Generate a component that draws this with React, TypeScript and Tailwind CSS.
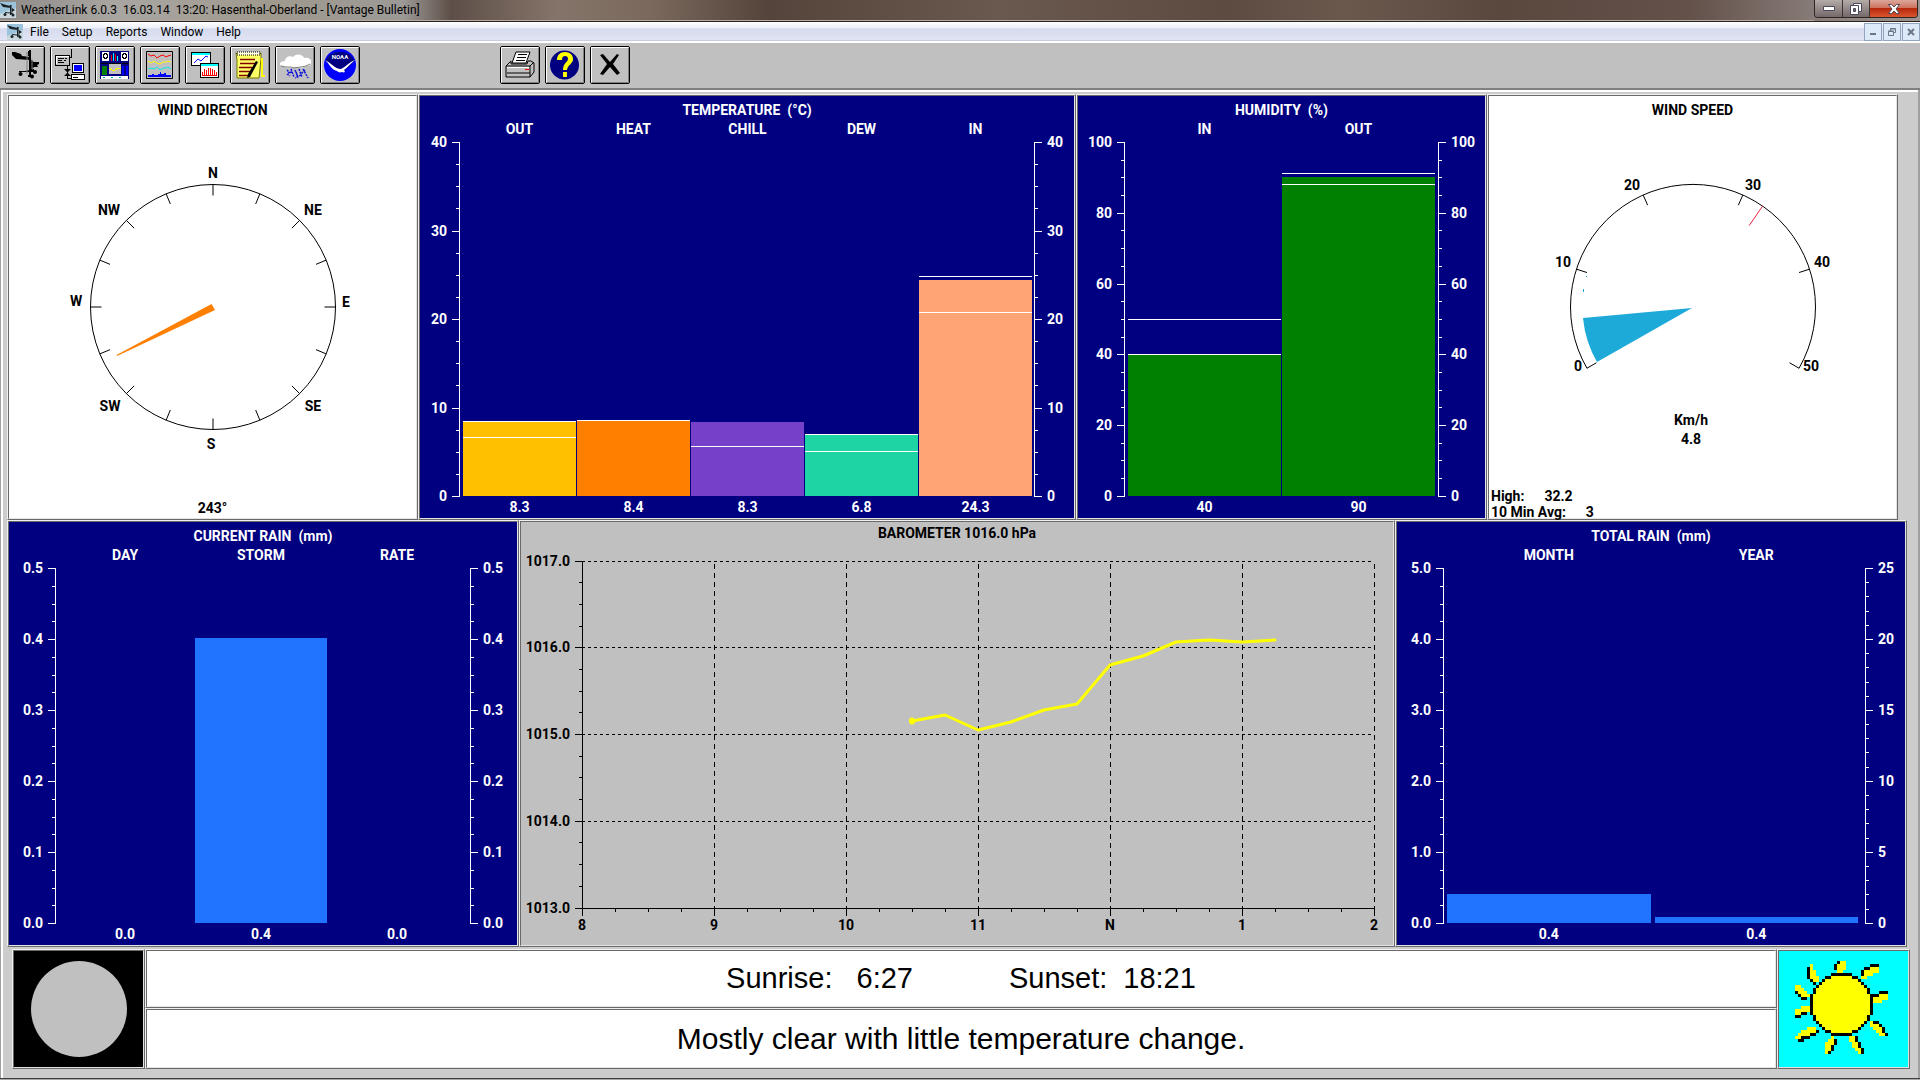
import React from 'react';

type Bar = { label: string; value: string; level: number; color: string; marks?: number[] };

const NAVY = 'bg-[#000080] text-white';

const temperature: Bar[] = [
  { label: 'OUT', value: '8.3', level: 8.4, color: 'bg-[#ffc000]', marks: [8.4, 6.6] },
  { label: 'HEAT', value: '8.4', level: 8.5, color: 'bg-[#ff8000]', marks: [8.5] },
  { label: 'CHILL', value: '8.3', level: 8.35, color: 'bg-[#7640c8]', marks: [5.5] },
  { label: 'DEW', value: '6.8', level: 6.9, color: 'bg-[#1ed4a4]', marks: [6.9, 5] },
  { label: 'IN', value: '24.3', level: 24.4, color: 'bg-[#ffa474]', marks: [24.8, 20.7] },
];

const humidity: Bar[] = [
  { label: 'IN', value: '40', level: 40, color: 'bg-[#008000]', marks: [39.8, 49.8] },
  { label: 'OUT', value: '90', level: 90.1, color: 'bg-[#008000]', marks: [91, 87.8] },
];

const currentRain: Bar[] = [
  { label: 'DAY', value: '0.0', level: 0, color: 'bg-[#2074ff]' },
  { label: 'STORM', value: '0.4', level: 0.401, color: 'bg-[#2074ff]' },
  { label: 'RATE', value: '0.0', level: 0, color: 'bg-[#2074ff]' },
];

// year is drawn against the right scale (25 mm), so it is a fifth of the left one
const totalRain: Bar[] = [
  { label: 'MONTH', value: '0.4', level: 0.41, color: 'bg-[#2074ff]' },
  { label: 'YEAR', value: '0.4', level: 0.085, color: 'bg-[#2074ff]' },
];

const pressure = [199, 193, 208, 200, 188, 182, 143, 134, 120, 118, 120, 118];

/* Etched frame used round every pane */
const Pane: React.FC<{ className?: string; children?: React.ReactNode }> = ({ className = '', children }) => (
  <section className="flex min-w-0 min-h-0 border border-t-[#f0f0f0] border-l-[#f0f0f0] border-r-[#696969] border-b-[#696969]">
    <div className={`flex flex-col flex-1 min-w-0 min-h-0 border border-t-[#696969] border-l-[#696969] border-r-[#e3e3e3] border-b-[#e3e3e3] ${className}`}>
      {children}
    </div>
  </section>
);

const Scale: React.FC<{ labels: string[]; minor: number; side: 'left' | 'right' }> = ({ labels, minor, side }) => {
  const ticks: (string | null)[] = [];
  labels.forEach((label, i) => {
    ticks.push(label);
    if (i < labels.length - 1) for (let k = 1; k < minor; k++) ticks.push(null);
  });
  return (
    <div className={`flex flex-col justify-between ${side === 'left' ? 'border-r' : 'border-l'} border-white`}>
      {ticks.map((label, i) => (
        <div key={i} className={`flex h-px items-center gap-[5px] ${side === 'left' ? 'justify-end' : 'flex-row-reverse justify-end'}`}>
          {label !== null && <span>{label}</span>}
          <i className={`h-px bg-white ${label !== null ? 'w-[7px]' : 'w-[3px]'}`} />
        </div>
      ))}
    </div>
  );
};

type BarChartProps = {
  title: string;
  bars: Bar[];
  max: number;
  left: string[];
  right: string[];
  minorLeft: number;
  minorRight: number;
  columns: string;
  inset: string;
};

const BarChart: React.FC<BarChartProps> = ({ title, bars, max, left, right, minorLeft, minorRight, columns, inset }) => (
  <Pane className={NAVY}>
    <h2 className="pt-[5px] text-center leading-[19px] whitespace-pre">{title}</h2>
    <div className={`grid flex-1 min-h-0 grid-rows-[22px_minmax(0,1fr)_21px] ${columns}`}>
      <div className={`col-start-2 flex ${inset}`}>
        {bars.map((b) => (
          <span key={b.label} className="flex-1 basis-0 text-center leading-[19px]">{b.label}</span>
        ))}
      </div>
      <div className="col-start-1 row-start-2 grid">
        <Scale labels={left} minor={minorLeft} side="left" />
      </div>
      <div className={`col-start-2 row-start-2 flex pb-px ${inset}`}>
        {bars.map((b) => (
          <div key={b.label} className="relative flex flex-1 basis-0 flex-col justify-end">
            <div className={b.color} style={{ height: `${(b.level / max) * 100}%` }} />
            {b.marks?.map((m) => (
              <i key={m} className="absolute inset-x-0 h-px bg-white" style={{ bottom: `${(m / max) * 100}%` }} />
            ))}
          </div>
        ))}
      </div>
      <div className="col-start-3 row-start-2 grid">
        <Scale labels={right} minor={minorRight} side="right" />
      </div>
      <div className={`col-start-2 row-start-3 flex ${inset}`}>
        {bars.map((b) => (
          <span key={b.label} className="flex-1 basis-0 text-center leading-[21px]">{b.value}</span>
        ))}
      </div>
    </div>
  </Pane>
);

const polar = (deg: number, r: number) => {
  const a = (deg * Math.PI) / 180;
  return [204 + r * Math.cos(a), 211 + r * Math.sin(a)];
};

const Tick: React.FC<{ deg: number; inner?: number; color?: string }> = ({ deg, inner = 111.5, color = '#000' }) => {
  const [x1, y1] = polar(deg, 122.5);
  const [x2, y2] = polar(deg, inner);
  return <line x1={x1} y1={y1} x2={x2} y2={y2} stroke={color} />;
};

const compass: [string, number, number][] = [
  ['N', 204, 77], ['NE', 304, 114], ['E', 337, 206], ['SE', 304, 310],
  ['S', 202, 348], ['SW', 101, 310], ['W', 67, 205], ['NW', 100, 114],
];

const WindDirection = () => (
  <Pane className="bg-white text-black">
    <h2 className="pt-[5px] text-center leading-[19px]">WIND DIRECTION</h2>
    <svg viewBox="0 24 407 368" className="min-h-0 w-full flex-1">
      <circle cx="204" cy="211" r="122.5" fill="none" stroke="#000" />
      {Array.from({ length: 16 }, (_, i) => <Tick key={i} deg={i * 22.5} />)}
      <polygon points="202.5,208 206,214 108,260 107.5,259" fill="#ff8000" />
      {compass.map(([t, x, y]) => (
        <text key={t} x={x} y={y + 5} textAnchor="middle">{t}</text>
      ))}
    </svg>
    <p className="flex h-[30px] items-end justify-center leading-[19px]">243°</p>
  </Pane>
);

const speeds: [number, number, number][] = [
  [0, 89, 270], [10, 74, 166], [20, 143, 89], [30, 264, 89], [40, 333, 166], [50, 322, 270],
];

const WindSpeed = () => (
  <Pane className="bg-white text-black">
    <h2 className="pt-[5px] text-center leading-[19px]">WIND SPEED</h2>
    <svg viewBox="0 24 407 368" className="min-h-0 w-full flex-1">
      <path d="M98 272.3 A122.5 122.5 0 1 1 310 272.3" fill="none" stroke="#000" />
      {speeds.map(([v]) => <Tick key={v} deg={150 + v * 4.8} />)}
      <Tick deg={304.6} inner={99} color="#f02040" />
      <path d="M203 212 L94 222 A109 109 0 0 0 108 266 Z" fill="#1eaad8" />
      <path d="M97 180h1v1h-1z M94 193h1v3h-1z" fill="#1eaad8" />
      {speeds.map(([v, x, y]) => (
        <text key={v} x={x} y={y + 5} textAnchor="middle">{v}</text>
      ))}
      <text x="202" y="329" textAnchor="middle">Km/h</text>
      <text x="202" y="348" textAnchor="middle">4.8</text>
    </svg>
    <dl className="h-[30px] pl-[2px] leading-4">
      <div className="flex gap-5">
        <dt>High:</dt>
        <dd>32.2</dd>
      </div>
      <div className="flex gap-5">
        <dt>10 Min Avg:</dt>
        <dd>3</dd>
      </div>
    </dl>
  </Pane>
);

const Barometer = () => (
  <Pane className="bg-[#c0c0c0] text-black">
    <h2 className="pt-[2px] text-center leading-[19px]">BAROMETER 1016.0 hPa</h2>
    <svg viewBox="0 21 872 402" className="min-h-0 w-full flex-1">
      <g stroke="#000" shapeRendering="crispEdges">
        {[0, 1, 2, 3].map((i) => {
          const y = 39.5 + Math.floor(i * 86.75);
          return <line key={i} x1="61" x2="853" y1={y} y2={y} strokeDasharray="3 3" />;
        })}
        {[1, 2, 3, 4, 5, 6].map((i) => (
          <line key={i} y1="42" y2="386" x1={61.5 + i * 132} x2={61.5 + i * 132} strokeDasharray="5 4" />
        ))}
        <path d="M61.5 39V387M61 386.5H854" />
        {Array.from({ length: 17 }, (_, i) => {
          const y = 39.5 + Math.floor(i * 21.6875);
          return <line key={i} x1={i % 4 ? 58 : 54} x2="61" y1={y} y2={y} />;
        })}
        {Array.from({ length: 25 }, (_, i) => (
          <line key={i} x1={61.5 + i * 33} x2={61.5 + i * 33} y1="386" y2={i % 4 ? 390 : 394} />
        ))}
      </g>
      {['1017.0', '1016.0', '1015.0', '1014.0', '1013.0'].map((t, i) => (
        <text key={t} x="49" y={44 + Math.floor(i * 86.75)} textAnchor="end">{t}</text>
      ))}
      {['8', '9', '10', '11', 'N', '1', '2'].map((t, i) => (
        <text key={t} x={61 + i * 132} y="408" textAnchor="middle">{t}</text>
      ))}
      <polyline points={pressure.map((y, i) => `${391 + i * 33},${y}`).join(' ')} fill="none" stroke="#ff0" strokeWidth="3" strokeLinejoin="round" strokeLinecap="round" />
      <ellipse cx="391" cy="199" rx="3" ry="3.5" fill="#ff0" />
    </svg>
  </Pane>
);

const sunArt = [
  '..............BYY..............',
  '.....Y.......BYYY........BBB...',
  '....BY.......BYYY......BBYYY...',
  '....BYY.......YY......BYYYYY...',
  '....BYY.....BBBBBBB...BYYY.....',
  '....BYYY..BBYYYYYYYBB.YY.......',
  '.....BYY.BYYYYYYYYYYYB.........',
  '......B.BYYYYYYYYYYYYYB........',
  'YY.....BYYYYYYYYYYYYYYYB.......',
  'YYY...BYYYYYYYYYYYYYYYYYB......',
  'BYYY..BYYYYYYYYYYYYYYYYYB...BBB',
  '.BYYYBYYYYYYYYYYYYYYYYYYYBBBYYY',
  '..BB.BYYYYYYYYYYYYYYYYYYYBYYYYY',
  '.....BYYYYYYYYYYYYYYYYYYYBYYY..',
  '.....BYYYYYYYYYYYYYYYYYYYB.....',
  '..YYYBYYYYYYYYYYYYYYYYYYYB.....',
  'YYYYYBYYYYYYYYYYYYYYYYYYYB.....',
  'YYBB.BYYYYYYYYYYYYYYYYYYYB.....',
  'BB....BYYYYYYYYYYYYYYYYYB......',
  '......BYYYYYYYYYYYYYYYYYB......',
  '.......BYYYYYYYYYYYYYYYB.YBB...',
  '........BYYYYYYYYYYYYYB..YYYB..',
  '....YYY..BYYYYYYYYYYYB....YYYB.',
  '..YYYYYB..BBYYYYYYYBB......YYB.',
  '.YYYYBB.....BBBBBBB.........YYB',
  'YYBBB.......Y.....YYB..........',
  '.BB........YYB....YYB..........',
  '..........YYYB.....YYB.........',
  '..........YYB......YYB.........',
  '..........YYB.......YYB........',
  '..........YB.........YB........',
];

const Sun = () => (
  <svg viewBox="0 0 31 31" className="h-[93px] w-[93px]" shapeRendering="crispEdges" role="img" aria-label="Sunny">
    {sunArt.flatMap((row, y) =>
      [...row].map((c, x) => (c === '.' ? null : <rect key={`${x}-${y}`} x={x} y={y} width="1" height="1" fill={c === 'B' ? '#000' : '#ff0'} />)),
    )}
  </svg>
);

const VaneLogo = () => (
  <svg viewBox="0 0 16 16" className="h-4 w-4">
    <rect width="16" height="16" fill="#9cc3dc" />
    <path d="M0 12l16-6v10H0z" fill="#c9d8de" />
    <path d="M0 1l6 2 5 1v2L3 5zM10 3h1.6v10H10zM12 6l3 2-3 2zM5 10l8 .8v1L5 11z" fill="#1c2326" />
    <circle cx="5" cy="12.500" r="1.500" fill="#1c2326" />
    <circle cx="13" cy="13" r="1.500" fill="#1c2326" />
  </svg>
);

const icons: Record<string, React.ReactNode> = {
  Station: (
    <>
      <path d="M7 6l3 0 6 2 1 2 8 1v3l-14-1-4-4zM24 4h2v27h-3v-2h1zM23 5h1v5h-1z" />
      <path d="M26 14l3 2h5v2l-2 1 1 2-4 0-3 3zM14 25h6l9-2v3h-15z" />
      <circle cx="15.500" cy="28" r="2" /><circle cx="30" cy="26" r="2" /><circle cx="27" cy="30.500" r="2" />
      <path d="M22 6v22M27 13v10" stroke="#808080" fill="none" />
    </>
  ),
  Download: (
    <g shapeRendering="crispEdges">
      <path d="M21.500 3v8h-2" fill="none" stroke="#000" />
      <path d="M5.500 9.500h14v10h-14z" fill="#c0c0c0" stroke="#000" />
      <path d="M6.500 18V10.500H19" fill="none" stroke="#fff" />
      <path d="M8 12h6v1H8zM8 14h4v1H8zM8 16h6v1H8zM15 12h2v1h-2zM14 14h2v1h-2z" />
      <path d="M17 20h1v12h4v1h-5z" /><path d="M14 23h7l-3.500 3.500zM14 30l3.500-3.500 3.500 3.500z" shapeRendering="auto" />
      <path d="M22.500 17.500h11v9h-11zM21.500 28.500h13v5h-13z" fill="#fff" stroke="#000" />
      <path d="M24 19h8v6h-8z" fill="#00f" /><path d="M23 31h5v1h-5z" />
    </g>
  ),
  Bulletin: (
    <g shapeRendering="crispEdges">
      <path d="M5 5h29v28H5z" fill="#000080" />
      <path d="M7 6h7v9H7zM26 6h7v9h-7zM6 30h27v3H6z" fill="#fff" />
      <circle cx="10.500" cy="10" r="2.200" fill="none" stroke="#000" /><circle cx="29.500" cy="10" r="2.200" fill="none" stroke="#000" />
      <path d="M14 18h12v10H14z" fill="#c0c0c0" /><path d="M14 22l3 2 3 0 3-2 3 1" fill="none" stroke="#ff0" />
      <path d="M16 9h1v6h-1zM20 8h1v7h-1z" fill="#f00" /><path d="M18 7h1v8h-1zM22 10h1v5h-1z" fill="#0ff" />
      <path d="M7 20h5v9H7z" fill="#008000" /><path d="M27 20h2v9h-2zM31 20h2v9h-2z" fill="#00f" />
      <path d="M6 17h7v1H6zM27 17h7v1h-7zM14 17h12v1H14z" />
      <path d="M8 31h2v1H8zM16 31h2v1h-2zM24 31h2v1h-2z" fill="#0aa" />
    </g>
  ),
  Plot: (
    <>
      <path d="M6.500 5.500h26v27h-26z" fill="#c0c0c0" stroke="#000" />
      <path d="M8 8l3 2 3-1 3 3 3-2 3-1 3 2 2-1 3-1" fill="none" stroke="#f00" />
      <path d="M8 15l3 2 3-2 3 2 3 1 3-2 3 0 2-1 3 1" fill="none" stroke="#ff0" />
      <path d="M8 23l3-1 3 1 3-2 3 3 3-2 3 0 2-1 3 2" fill="none" stroke="#0ee" />
      <path d="M8 31v-2h4v-1h2v1h4v-1h2v-2h1v2h3v-1h2v2h5v2z" fill="#00f" />
    </>
  ),
  Strip: (
    <g shapeRendering="crispEdges">
      <path d="M6.500 6.500h19v13h-19z" fill="#fff" stroke="#000" /><path d="M7 7h18v2H7z" fill="#0ff" />
      <path d="M9 17l4-4 3 2 5-5 2 1" fill="none" stroke="#00f" shapeRendering="auto" />
      <path d="M15.500 17.500h18v14h-18z" fill="#fff" stroke="#000" /><path d="M16 18h17v2H16z" fill="#0ff" />
      <path d="M17 26h1v4h-1zM19 23h1v7h-1zM21 24h1v6h-1zM23 22h1v8h-1zM25 22h1v8h-1zM27 23h1v7h-1zM29 24h1v6h-1zM31 26h1v4h-1zM17 29h15v1H17z" fill="#f00" />
    </g>
  ),
  Notes: (
    <>
      <path d="M6 7h25v6l-2 19H7V14z" fill="#ff6" stroke="#770" /><path d="M7 6h23v3H7z" fill="#ffd" stroke="#000" strokeDasharray="1 1" />
      <path d="M32 12v18h3" fill="none" stroke="#ff0" strokeWidth="2" />
      <path d="M10 13.500h15M10 17.500h16M9 21.500h13M9 25.500h11M9 29.500h9" stroke="#800000" strokeWidth="1.500" />
      <path d="M26 15l2 1-8 15-3 1 1-4z" />
    </>
  ),
  Rain: (
    <>
      <path d="M5 19c-1-3 3-4 5-4 0-4 5-6 8-4 3-4 10-3 11 1 5-1 8 2 7 5 0 2-2 3-4 3l-6 2-8-1-4 1-5-1z" fill="#fff" />
      <path d="M6 20l5 1 5 0 2 1 8-1 5-1 4-2" stroke="#808080" fill="none" />
      <path d="M12 24l3 3M16 23l3 8M20 24l3 7M24 23l3 8M28 23l5 9M12 28l3 2M17 26l-4 1M21 26l2 6M26 29l-6 3M30 24l-4 4" fill="none" stroke="#1010e0" strokeWidth="1.500" strokeDasharray="2 1" />
    </>
  ),
  Noaa: (
    <>
      <circle cx="20" cy="19" r="16" fill="#00f" />
      <path d="M5.500 15a16 16 0 0 1 29 0c-4 3-8 10-12 10s-11-6-17-10z" fill="#000080" />
      <path d="M5 14c5 2 10 9 16 9 5-2 8-7 14-9-5 4-8 8-11 10 2 2 0 3-2 2-2 1-4 0-5-1C11 24 9 17 5 14z" fill="#fff" />
      <text x="20" y="13" textAnchor="middle" fontSize="6" fill="#fff">NOAA</text>
    </>
  ),
  Print: (
    <>
      <path d="M16 6h14l-4 11H12z" fill="#fff" stroke="#000" />
      <path d="M18 8.500h9M17 11.500h9M16 14.500h9" stroke="#000" />
      <path d="M11 15l-5 5v11h24l4-5V17l-3-2h-3l-1 3H11z" fill="#c0c0c0" stroke="#000" />
      <path d="M6 20h24v11M30 20l4-4M7 27h23" fill="none" stroke="#000" />
      <path d="M7 21.500h22" stroke="#fff" /><path d="M25 23h4v1h-4z" fill="#f00" />
    </>
  ),
  Help: (
    <>
      <circle cx="19.500" cy="19" r="14.500" fill="#000080" />
      <path d="M12 14c0-5 3-8 8-8s8 3 8 7c0 5-5 5-6 11h-4c0-7 5-8 5-11 0-2-1-3-3-3s-3 1-3 4z" fill="#ff0" />
      <path d="M18 26h4v5h-4z" fill="#ff0" />
    </>
  ),
  Exit: <path d="M10 9l3-1 7 8 7-8 2 1-6 9 7 9-3 2-7-8-7 8-3-1 7-10z" />,
};

const ToolButton: React.FC<{ name: string }> = ({ name }) => (
  <button aria-label={name} className="h-[38px] w-10 rounded-[2px] border border-black bg-[#c0c0c0]">
    <span className="block h-9 w-[38px] border border-t-white border-l-white border-r-[#808080] border-b-[#808080]">
      <svg viewBox="2 2 36 34" className="h-[34px] w-9">{icons[name]}</svg>
    </span>
  </button>
);

const App: React.FC = () => {
  return (
    <div className="flex h-screen min-h-[640px] w-full flex-col bg-[#c0c0c0] font-['Roboto',sans-serif] text-[14px] font-bold">
      {/* Title bar */}
      <header className="flex h-[22px] shrink-0 items-start border-b border-[#2c2220] bg-[linear-gradient(90deg,#8d8a88_0%,#a9a6a2_6%,#a09a8e_14%,#9c9996_21%,#5d4f48_23.500%,#857469_29%,#7a685c_34%,#54443b_40%,#6a594e_52%,#5d4a41_64%,#6b584d_70%,#5a483f_78%,#63514a_88%,#8a7f7b_95%,#9c9490_100%)] text-[12px] font-normal">
        <div className="flex h-[21px] flex-1 items-center gap-[5px] border-b border-[#b3aaa5] text-black">
          <VaneLogo />
          <h1 className="whitespace-pre">WeatherLink 6.0.3  16.03.14  13:20: Hasenthal-Oberland - [Vantage Bulletin]</h1>
        </div>
        <div className="mr-[2px] flex h-[18px] overflow-hidden rounded-b border border-t-0 border-[#2f2624]">
          <button aria-label="Minimize" className="flex w-7 items-center justify-center border-r border-[#3e3533] bg-linear-to-b from-[#b4aca8] to-[#75696a]">
            <svg viewBox="0 0 12 6" className="h-[6px] w-3"><path d="M.5.5h11v4H.5z" fill="#fff" stroke="#4a4a5a" /></svg>
          </button>
          <button aria-label="Restore" className="flex w-[27px] items-center justify-center border-r border-[#3e3533] bg-linear-to-b from-[#b4aca8] to-[#75696a]">
            <svg viewBox="0 0 12 12" className="h-3 w-3"><path d="M3.500.5h8v8h-8z" fill="#fff" stroke="#4a4a5a" /><path d="M.5 2.500h8v9h-8z" fill="#fff" stroke="#4a4a5a" /><path d="M3.500 5.500h2v3h-2z" fill="#75696a" stroke="#4a4a5a" /></svg>
          </button>
          <button aria-label="Close" className="flex w-[47px] items-center justify-center bg-[linear-gradient(#dba79b_0%,#cf7460_45%,#b8290c_50%,#d9562f_100%)]">
            <svg viewBox="0 0 12 10" className="h-[10px] w-3"><path d="M.5.5h3L6 3 8.500.5h3L8 5l3.500 4.500h-3L6 7 3.500 9.500h-3L4 5z" fill="#fff" stroke="#4a4a5a" /></svg>
          </button>
        </div>
      </header>

      {/* Menu */}
      <nav className="flex h-[21px] shrink-0 items-center border-b-2 border-white bg-[linear-gradient(#ffffff_0%,#eceff7_30%,#d5dbee_36%,#e0e4f4_94%,#b4bad0_100%)] pl-[7px] text-[12px] font-normal text-black">
        <VaneLogo />
        <div className="flex flex-1 gap-[13px] pl-[7px]">
          {['File', 'Setup', 'Reports', 'Window', 'Help'].map((m) => (
            <button key={m}>{m}</button>
          ))}
        </div>
        <div className="flex h-[18px] gap-px">
          <button aria-label="Minimize document" className="flex w-[18px] items-center justify-center border border-[#94a6bd] bg-[#dce9f8]">
            <svg viewBox="0 0 8 8" className="h-2 w-2"><path d="M1 5h6v2H1z" fill="#6b7686" /></svg>
          </button>
          <button aria-label="Restore document" className="flex w-[18px] items-center justify-center border border-[#94a6bd] bg-[#dce9f8]">
            <svg viewBox="0 0 8 8" className="h-2 w-2"><path d="M2.500 3V.5h5v4H6M.5 3.500h5v4h-5zM0 3h6M2 1h6" fill="none" stroke="#6b7686" /></svg>
          </button>
          <button aria-label="Close document" className="flex w-[18px] items-center justify-center border border-[#94a6bd] bg-[#dce9f8]">
            <svg viewBox="0 0 8 8" className="h-2 w-2"><path d="M1 1l6 6M7 1L1 7" stroke="#6b7686" strokeWidth="2" /></svg>
          </button>
        </div>
      </nav>

      {/* Toolbar */}
      <div className="flex h-[47px] shrink-0 gap-[5px] border-b-2 border-[#808080] pt-[3px] pl-[5px]">
        {['Station', 'Download', 'Bulletin', 'Plot', 'Strip', 'Notes', 'Rain', 'Noaa'].map((n) => <ToolButton key={n} name={n} />)}
        <div className="w-[130px]" />
        {['Print', 'Help', 'Exit'].map((n) => <ToolButton key={n} name={n} />)}
      </div>

      {/* Bulletin window */}
      <main className="flex min-h-0 flex-1 flex-col border-r-2 border-l border-[#a0a0a0] bg-[#cccccc]">
        <div className="flex min-h-0 flex-1 flex-col border-t-2 border-l-2 border-white pt-[2px] pb-[9px] pl-1">
          <div className="grid min-h-0 flex-[426] basis-0 grid-cols-[411fr_658fr_411fr_411fr] grid-rows-[minmax(0,1fr)] pr-5">
            <WindDirection />
            <BarChart
              title="TEMPERATURE  (°C)"
              bars={temperature}
              max={40}
              left={['40', '30', '20', '10', '0']}
              right={['40', '30', '20', '10', '0']}
              minorLeft={4}
              minorRight={4}
              columns="grid-cols-[40px_minmax(0,1fr)_40px]"
              inset="gap-px pl-[3px] pr-[2px]"
            />
            <BarChart
              title="HUMIDITY  (%)"
              bars={humidity}
              max={100}
              left={['100', '80', '60', '40', '20', '0']}
              right={['100', '80', '60', '40', '20', '0']}
              minorLeft={4}
              minorRight={4}
              columns="grid-cols-[47px_minmax(0,1fr)_47px]"
              inset="gap-px px-[3px]"
            />
            <WindSpeed />
          </div>
          <div className="grid min-h-0 flex-[427] basis-0 grid-cols-[512fr_876fr_512fr] grid-rows-[minmax(0,1fr)] pr-[11px]">
            <BarChart
              title="CURRENT RAIN  (mm)"
              bars={currentRain}
              max={0.5}
              left={['0.5', '0.4', '0.3', '0.2', '0.1', '0.0']}
              right={['0.5', '0.4', '0.3', '0.2', '0.1', '0.0']}
              minorLeft={4}
              minorRight={4}
              columns="grid-cols-[47px_minmax(0,1fr)_47px]"
              inset="gap-1 pl-[3px] pr-[7px]"
            />
            <Barometer />
            <BarChart
              title="TOTAL RAIN  (mm)"
              bars={totalRain}
              max={5}
              left={['5.0', '4.0', '3.0', '2.0', '1.0', '0.0']}
              right={['25', '20', '15', '10', '5', '0']}
              minorLeft={4}
              minorRight={5}
              columns="grid-cols-[47px_minmax(0,1fr)_40px]"
              inset="gap-1 pl-[3px] pr-[7px]"
            />
          </div>

          {/* Forecast */}
          <div className="mt-[2px] grid h-[120px] grid-cols-[133px_1fr_133px] pr-2 pl-[5px]">
            <Pane className="items-center justify-center bg-black">
              <div className="h-24 w-24 rounded-full bg-[#c0c0c0]" />
            </Pane>
            <div className="grid grid-rows-[59px_61px] font-['Liberation_Sans',sans-serif] font-normal text-black">
              <Pane className="items-center justify-center bg-white pb-[2px]">
                <p className="flex gap-24 text-[29px] leading-[36px]">
                  <span className="flex gap-6"><span>Sunrise:</span><span>6:27</span></span>
                  <span className="flex gap-4"><span>Sunset:</span><span>18:21</span></span>
                </p>
              </Pane>
              <Pane className="items-center justify-center bg-white">
                <p className="text-[30px] leading-[36px]">Mostly clear with little temperature change.</p>
              </Pane>
            </div>
            <Pane className="items-center justify-center bg-[#00ffff] pr-1 pb-1">
              <Sun />
            </Pane>
          </div>
        </div>
      </main>
      <div className="h-[2px] shrink-0 border-t border-[#404040] bg-[#a8a8a8]" />
    </div>
  );
};

export default App;
